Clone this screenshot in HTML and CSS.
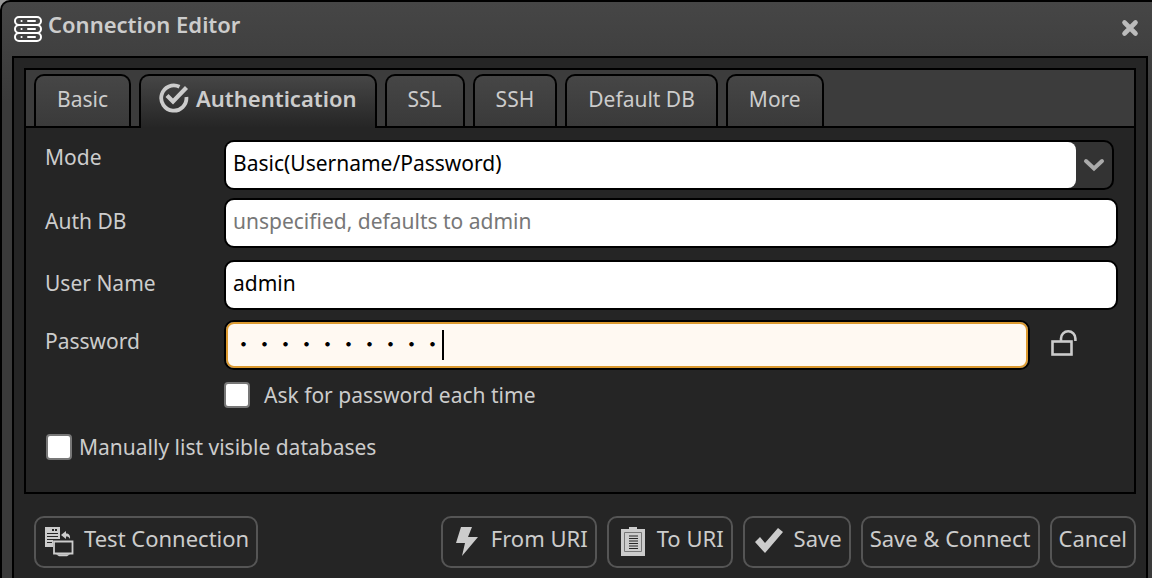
FILE: index.html
```html
<!DOCTYPE html>
<html lang="en">
<head>
<meta charset="utf-8">
<title>Connection Editor</title>
<link rel="stylesheet" href="styles.css">
</head>
<body>
<main class="window">
  <header class="titlebar">
    <svg class="title-icon" width="28" height="26" viewBox="0 0 28 26" fill="none" stroke="#fff" stroke-width="2" stroke-linecap="round">
      <rect x="1" y="1" width="26" height="8" rx="4"/><rect x="1" y="9" width="26" height="8" rx="4"/><rect x="1" y="17" width="26" height="8" rx="4"/>
      <path d="M7.500 5h.1M14 5h7M7.500 13h.1M14 13h7M7.500 21h.1M14 21h7"/>
    </svg>
    <h1 class="title">Connection Editor</h1>
    <button class="close" type="button" aria-label="Close">
      <svg width="18" height="18" viewBox="0 0 18 18" stroke="#bbb" stroke-width="4.600" stroke-linecap="round"><path d="M3.500 3.500l11 11M14.500 3.500l-11 11"/></svg>
    </button>
  </header>
  <form class="content">
    <section class="pane">
      <nav class="tabs" role="tablist">
        <button class="tab" type="button" role="tab">Basic</button>
        <button class="tab active" type="button" role="tab" aria-selected="true">
          <svg width="30" height="30" viewBox="0 0 30 30" fill="none" stroke="#ccc"><path d="M20.500 3.800A12.600 12.600 0 1 0 27.400 14" stroke-width="3.800"/><path d="M8 12.500l6 6L27.500 4.500" stroke-width="4.200"/></svg>
          Authentication</button>
        <button class="tab" type="button" role="tab">SSL</button>
        <button class="tab" type="button" role="tab">SSH</button>
        <button class="tab" type="button" role="tab">Default DB</button>
        <button class="tab" type="button" role="tab">More</button>
      </nav>
      <div class="fields">
        <div class="row mode-row">
          <label class="label" for="mode">Mode</label>
          <div class="combo">
            <select class="combo-select" id="mode"><option>Basic(Username/Password)</option></select>
            <svg class="combo-arrow" width="22" height="14" viewBox="0 0 22 14" fill="none" stroke="#aaa" stroke-width="4" stroke-linecap="round"><path d="M3 3l8 7.500L19 3"/></svg>
          </div>
        </div>
        <div class="row authdb-row">
          <label class="label" for="authdb">Auth DB</label>
          <input class="input" id="authdb" type="text" placeholder="unspecified, defaults to admin">
        </div>
        <div class="row">
          <label class="label" for="user">User Name</label>
          <input class="input" id="user" type="text" value="admin">
        </div>
        <div class="row password-row">
          <label class="label" for="password">Password</label>
          <div class="password">
            <input class="input password-input" id="password" type="password" placeholder="・・・・・・・・・・">
            <span class="caret"></span>
          </div>
          <button class="reveal" type="button" aria-label="Show password">
            <svg width="28" height="28" viewBox="0 0 28 28" fill="none" stroke="#ccc" stroke-width="2.600"><rect x="2.500" y="12.500" width="19" height="13"/><path d="M11 12V9.500a7.200 7.200 0 0 1 14.400 0V12"/></svg>
          </button>
        </div>
        <label class="check ask"><input class="box" type="checkbox">Ask for password each time</label>
        <label class="check list"><input class="box" type="checkbox">Manually list visible databases</label>
      </div>
    </section>
    <footer class="actions">
      <button class="btn test" type="button">
        <svg width="30" height="30" viewBox="0 0 30 30"><path fill="#ccc" d="M1 0h15v12H9v8H1z"/><path stroke="#252525" stroke-width="1" d="M3 6.500h11M3 9.500h11M3 12.500h6M3 15.500h5"/><path fill="#252525" d="M8 2h2v2H8zM11 2h2v2h-2z"/><path d="M10 14.500h18.500v12H10z" fill="#252525" stroke="#ccc" stroke-width="1.800"/><path fill="#ccc" d="M12 27.200h14l-3 2h-8zM17 8l5-4v2.500c3 0 4.500 2 4 5.500-1-2-2-2.500-4-2.500V12z"/></svg>
        Test Connection</button>
      <button class="btn wide-icon" type="button">
        <svg width="26" height="30" viewBox="0 0 26 30" fill="#ccc"><path d="M7 0h11l-4 10h10L8 29l3-13H2z"/></svg>
        From URI</button>
      <button class="btn wide-icon" type="button">
        <svg width="26" height="30" viewBox="0 0 26 30"><path fill="#ccc" d="M1 2h8V0h8v2h8v27H1z"/><path fill="none" stroke="#777" d="M4.500 5.500h17v19h-17z"/><path fill="none" stroke="#252525" stroke-width="1.200" d="M9 9h9M9 11.500h9M9 14h9M9 16.500h9M9 19h9M9 21.500h9"/></svg>
        To URI</button>
      <button class="btn save" type="button">
        <svg width="30" height="28" viewBox="0 0 30 28" fill="#ccc"><path d="M1 15l5-5 5 6L24 1l5 4L11 26z"/></svg>
        Save</button>
      <button class="btn" type="button">Save &amp; Connect</button>
      <button class="btn" type="button">Cancel</button>
    </footer>
  </form>
</main>
</body>
</html>
```
FILE: styles.css
```css
* {
  box-sizing: border-box;
}

body {
  margin: 0;
  background: #999;
  color: #ccc;
  font: 22px/30px "Noto Sans", sans-serif;
}

button, input, select {
  font: inherit;
  color: inherit;
}

button {
  cursor: pointer;
}

svg {
  flex: none;
}

.window {
  display: flex;
  flex-direction: column;
  min-height: 100vh;
  padding: 0 4px 0 10px;
  border: solid #000;
  border-width: 2px 0 0 2px;
  border-radius: 10px 0 0 0;
  background: linear-gradient(#464646, #3a3a3a 100px);
}

.titlebar {
  display: flex;
  align-items: flex-start;
  height: 54px;
  padding: 7px 9px 0 2px;
  gap: 6px;
}

.title-icon {
  margin-top: 7px;
}

.title {
  flex: 1;
  margin: 0;
  font-size: 22px;
  font-weight: 600;
}

.close, .reveal {
  display: flex;
  padding: 0;
  border: 0;
  background: none;
}

.close {
  margin-top: 10px;
}

.content {
  flex: 1;
  padding: 10px 10px 0;
  border: solid #000;
  border-width: 2px 2px 0;
  background: #252525;
}

.pane {
  border: 2px solid #000;
}

.tabs {
  display: flex;
  gap: 8px;
  height: 58px;
  padding: 4px 8px 0;
  border-bottom: 2px solid #000;
  background: #3c3c3c;
}

.tab {
  display: flex;
  gap: 7px;
  padding: 8px 21px 0;
  border: 2px solid #000;
  border-bottom: 0;
  border-radius: 10px 10px 0 0;
  background: linear-gradient(#464646, #3a3a3a);
  font-size: 21px;
}

.tab.active {
  margin-bottom: -2px;
  padding: 7px 18px 0;
  background: linear-gradient(#464646, #252525);
  font-size: 22px;
  font-weight: 600;
}

.fields {
  display: flex;
  flex-direction: column;
  padding: 12px 16px 30px 19px;
  font-size: 21px;
}

.row {
  display: flex;
  align-items: flex-start;
  margin-bottom: 10px;
}

.mode-row {
  margin-bottom: 8px;
  padding-right: 4px;
}

.authdb-row {
  margin-bottom: 12px;
}

.label {
  width: 179px;
  padding-top: 8px;
}

.mode-row .label {
  padding-top: 2px;
}

.password-row .label {
  padding-top: 6px;
}

.input, .combo {
  flex: 1;
  min-width: 0;
  height: 50px;
  border: 2px solid #000;
  border-radius: 10px;
}

.input {
  padding: 0 7px 5px;
  background: #fff;
  color: #000;
  outline: 0;
}

.input::placeholder {
  color: #777;
}

.combo {
  display: flex;
  background: #333;
}

.combo-select {
  flex: 1;
  appearance: none;
  padding: 0 7px 5px;
  border: 0;
  border-radius: 8px;
  background: #fff;
  color: #000;
}

.combo-arrow {
  align-self: center;
  margin: 0 7px;
}

.password {
  position: relative;
  display: flex;
  flex: 1;
}

.password-input {
  box-shadow: inset 0 0 0 2px #dc9a30;
  background: #fff9f2;
  font-family: "Noto Sans CJK JP", sans-serif;
}

.password-input::placeholder {
  color: #000;
}

.caret {
  position: absolute;
  top: 10px;
  left: 218px;
  width: 2px;
  height: 30px;
  background: #000;
}

.reveal {
  margin: 9px 40px 0 20px;
}

.check {
  display: flex;
  align-items: center;
  align-self: flex-start;
}

.box {
  appearance: none;
  width: 26px;
  height: 26px;
  margin: 0;
  border: 2px solid #777;
  border-radius: 4px;
  background: #fff;
}

.ask {
  gap: 14px;
  margin: 0 0 22px 179px;
}

.list {
  gap: 7px;
  margin-left: 1px;
}

.actions {
  display: flex;
  gap: 10px;
  padding: 22px 0 10px 10px;
}

.btn {
  display: flex;
  align-items: flex-start;
  gap: 10px;
  height: 52px;
  padding: 5px 7px 0;
  border: 2px solid #555;
  border-radius: 10px;
  background: none;
}

.btn svg {
  margin-top: 4px;
}

.btn.wide-icon {
  gap: 11px;
  padding-left: 11px;
}

.btn.save {
  padding-left: 9px;
}

.btn.test {
  margin-right: auto;
  padding-left: 8px;
}
```
